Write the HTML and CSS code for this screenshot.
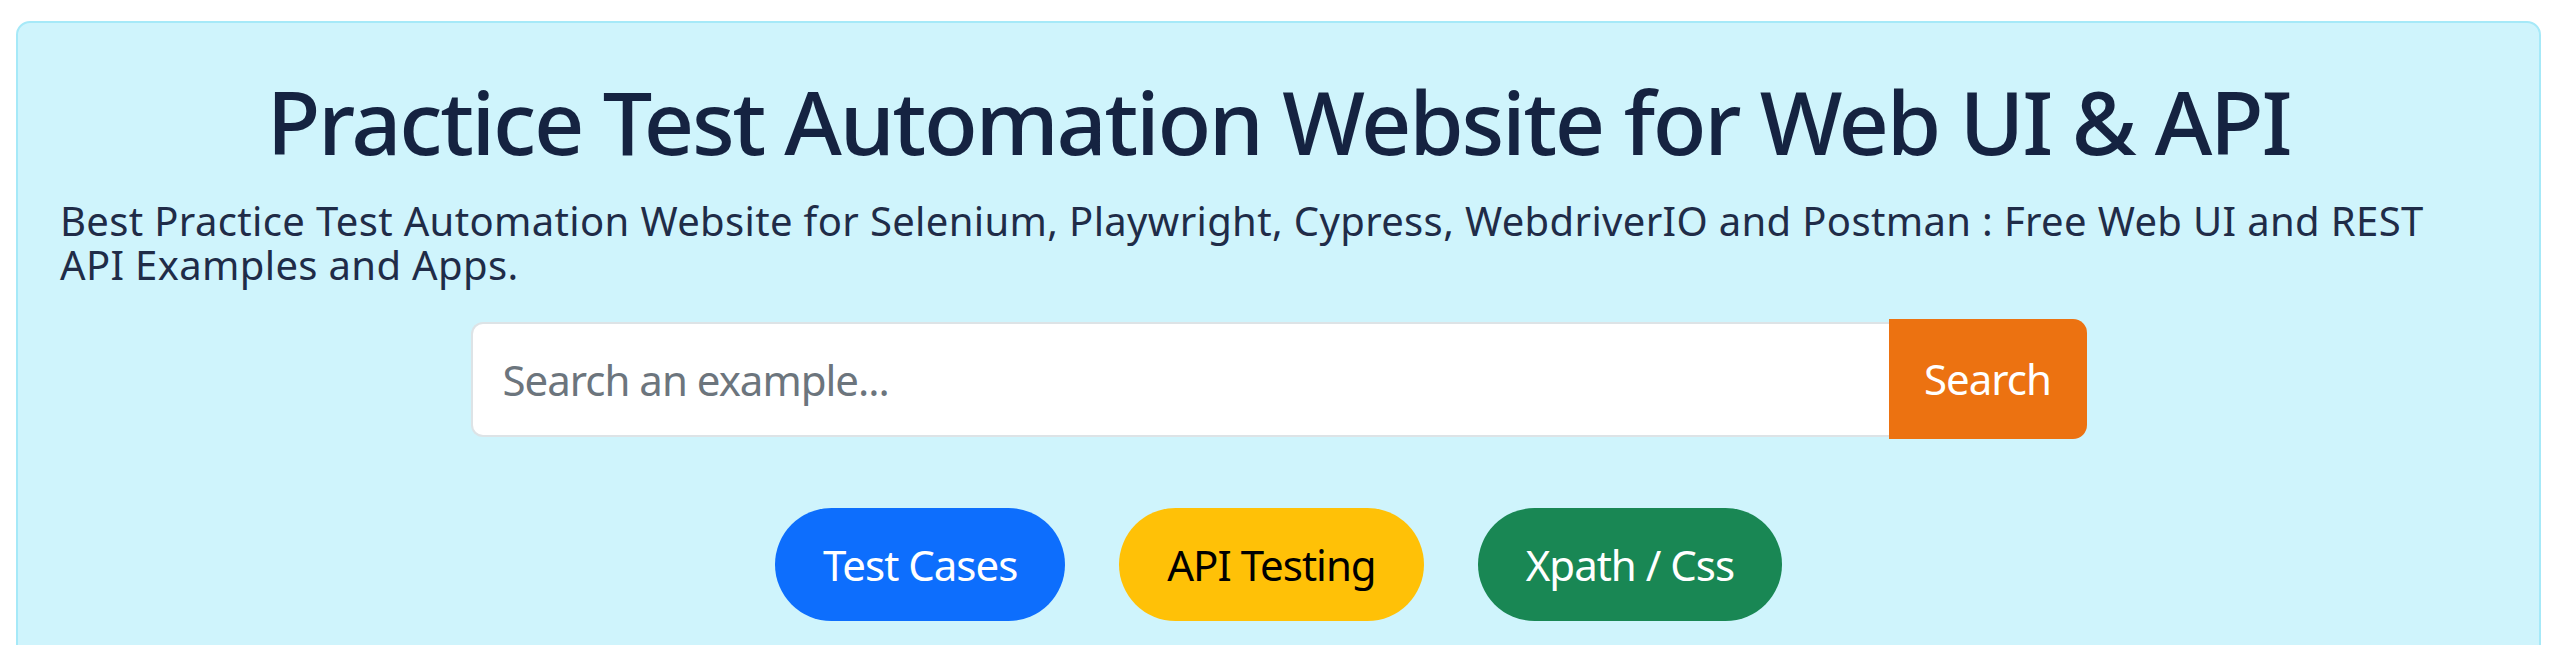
FILE: index.html
```html
<!DOCTYPE html>
<html lang="en">
<head>
    <meta charset="UTF-8">
    <meta name="viewport" content="width=device-width, initial-scale=1.0">
    <title>Practice Test Automation</title>
    <link rel="stylesheet" href="styles.css">
</head>
<body>
    <div class="hero">
        <h1>Practice Test Automation Website for Web UI &amp; API</h1>
        <p class="lead">Best Practice Test Automation Website for Selenium, Playwright, Cypress, WebdriverIO and Postman : Free Web UI and REST API Examples and Apps.</p>

        <form class="search-group">
            <input type="text" placeholder="Search an example...">
            <button type="submit">Search</button>
        </form>

        <div class="quick-links">
            <a href="#" class="pill pill-blue">Test Cases</a>
            <a href="#" class="pill pill-yellow">API Testing</a>
            <a href="#" class="pill pill-green">Xpath / Css</a>
        </div>
    </div>
</body>
</html>
```

FILE: styles.css
```css
/* Global Styles */
* {
    margin: 0;
    padding: 0;
    box-sizing: border-box;
}

body {
    font-family: "Noto Sans", "Open Sans", sans-serif;
    background-color: #ffffff;
    color: #1c2945;
    overflow: hidden;
}

/* Hero box */
.hero {
    margin: 21px 19px 0 16px;
    padding: 46px 42px 60px;
    background-color: #cff4fc;
    border: 2px solid #a6e9f8;
    border-radius: 14px;
    min-height: 700px;
}

.hero h1 {
    font-size: 88px;
    font-weight: 500;
    line-height: 1.2;
    text-align: center;
    color: #152341;
    letter-spacing: -2.3px;
}

.lead {
    margin-top: 24px;
    padding-right: 24px;
    font-size: 40px;
    line-height: 44px;
    color: #1f2c48;
    letter-spacing: 0.35px;
}

/* Search */
.search-group {
    display: flex;
    width: 1616px;
    margin: 32px auto 0;
}

.search-group input {
    flex: 1;
    height: 115px;
    margin-top: 3px;
    padding: 0 30px;
    border: 2px solid #dde3e6;
    border-right: none;
    border-radius: 12px 0 0 12px;
    font-family: inherit;
    font-size: 42px;
    color: #1c2945;
    letter-spacing: -1px;
    outline: none;
}

.search-group input::placeholder {
    color: #6c757d;
}

.search-group button {
    width: 198px;
    height: 120px;
    border: none;
    border-radius: 0 14px 14px 0;
    background-color: #ec7211;
    color: #ffffff;
    font-family: inherit;
    font-size: 42px;
    letter-spacing: -1px;
    cursor: pointer;
}

/* Quick links */
.quick-links {
    display: flex;
    justify-content: center;
    gap: 54px;
    margin-top: 69px;
}

.pill {
    display: flex;
    align-items: center;
    height: 113px;
    padding: 0 48px;
    border-radius: 57px;
    font-size: 42px;
    letter-spacing: -1px;
    text-decoration: none;
    color: #ffffff;
}

.pill-blue {
    background-color: #0d6efd;
}

.pill-yellow {
    background-color: #ffc107;
    color: #000000;
}

.pill-green {
    background-color: #198754;
}
```
